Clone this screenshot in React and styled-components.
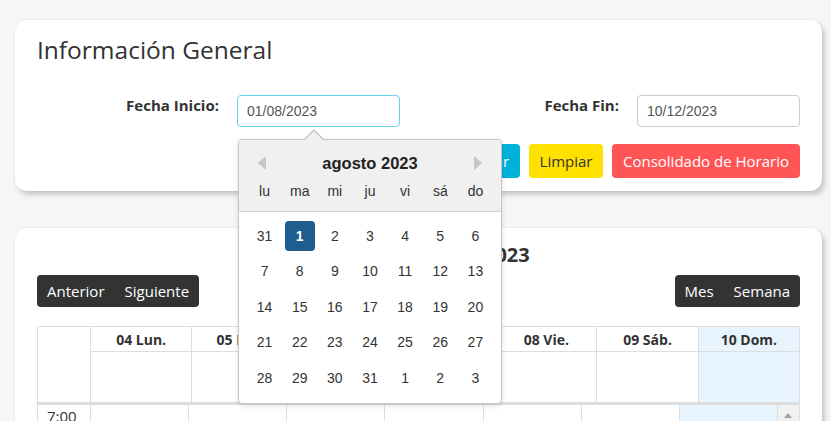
import React from "react";
import styled, { createGlobalStyle } from "styled-components";

const GlobalStyle = createGlobalStyle`
  html, body {
    margin: 0;
    padding: 0;
    overflow: hidden;
  }
  body {
    background: #f6f6f6;
    font-family: "Open Sans", "Liberation Sans", sans-serif;
    color: #333;
  }
  * {
    box-sizing: border-box;
  }
`;

const Page = styled.div`
  padding: 20px 9px 0 15px;
  display: flex;
  flex-direction: column;
  gap: 37px;
`;

const Card = styled.section`
  background: #fff;
  border-radius: 12px;
  box-shadow: 0 0 3px rgba(0, 0, 0, 0.08), 3px 4px 5px rgba(0, 0, 0, 0.18);
  padding: ${({ $pad }) => $pad};
`;

const Title = styled.h2`
  margin: 0;
  font-size: 24.5px;
  font-weight: 400;
  line-height: 33px;
  color: #333;
`;

const FormGrid = styled.div`
  margin-top: 29px;
  display: grid;
  grid-template-columns: 182px 163px 1fr 163px;
  column-gap: 18px;
  align-items: start;
`;

const Label = styled.label`
  text-align: right;
  font-weight: 700;
  font-size: 15px;
  line-height: 21px;
`;

const InputWrap = styled.div`
  position: relative;
`;

const DateInput = styled.input`
  width: 100%;
  height: 32px;
  border: 1px solid ${({ $focus }) => ($focus ? "#66d3f1" : "#ccc")};
  border-radius: 4px;
  padding: 0 9px;
  font-family: "Liberation Sans", Arial, sans-serif;
  font-size: 14px;
  color: #555;
  outline: none;
  background: #fff;
`;

const Actions = styled.div`
  margin-top: 17px;
  display: flex;
  justify-content: flex-end;
  gap: 8.5px;
`;

const Button = styled.button`
  height: 34px;
  padding: 0 11px;
  border: none;
  border-radius: 4px;
  font-family: "Open Sans", sans-serif;
  font-size: 15px;
  background: ${({ $bg }) => $bg};
  color: ${({ $fg }) => $fg};
`;

/* datepicker popup */
const Popup = styled.div`
  position: absolute;
  top: 44px;
  left: 1px;
  width: 264px;
  background: #fff;
  border: 1px solid #c5c5c5;
  border-radius: 4px;
  box-shadow: 0 2px 5px rgba(0, 0, 0, 0.12);
  z-index: 10;
  &::before,
  &::after {
    content: "";
    position: absolute;
    width: 0;
    height: 0;
    border-style: solid;
    border-color: transparent;
  }
  &::before {
    top: -11px;
    left: 65px;
    border-width: 0 10px 10px 10px;
    border-bottom-color: #c5c5c5;
  }
  &::after {
    top: -9px;
    left: 66px;
    border-width: 0 9px 9px 9px;
    border-bottom-color: #f0f0f0;
  }
`;

const PopHeader = styled.div`
  background: #f0f0f0;
  border-bottom: 1px solid #d2d2d2;
  border-radius: 3px 3px 0 0;
  padding: 8px 8px 7px;
  font-family: "Liberation Sans", Arial, sans-serif;
`;

const MonthRow = styled.div`
  height: 30px;
  display: flex;
  align-items: center;
  justify-content: space-between;
  padding: 0 11px;
`;

const MonthTitle = styled.div`
  font-size: 16.5px;
  font-weight: 700;
  color: #222;
`;

const NavArrow = styled.span`
  width: 0;
  height: 0;
  border-top: 7px solid transparent;
  border-bottom: 7px solid transparent;
  ${({ $dir }) =>
    $dir === "left"
      ? "border-right: 8px solid #c6c6c6;"
      : "border-left: 8px solid #c6c6c6;"}
`;

const WeekRow = styled.div`
  display: grid;
  grid-template-columns: repeat(7, 1fr);
  height: 26px;
  align-items: center;
  text-align: center;
  font-size: 14px;
  color: #333;
`;

const DaysGrid = styled.div`
  display: grid;
  grid-template-columns: repeat(7, 1fr);
  grid-auto-rows: 35.5px;
  padding: 6px 8px 7px;
  font-family: "Liberation Sans", Arial, sans-serif;
`;

const DayCell = styled.div`
  display: flex;
  align-items: center;
  justify-content: center;
  font-size: 14px;
  color: #333;
`;

const DayMark = styled.span`
  width: 30px;
  height: 30px;
  display: flex;
  align-items: center;
  justify-content: center;
  border-radius: 4px;
  background: ${({ $active }) => ($active ? "#1f5c8f" : "transparent")};
  color: ${({ $active }) => ($active ? "#fff" : "inherit")};
  font-weight: ${({ $active }) => ($active ? 700 : 400)};
`;

/* week calendar */
const CalTitle = styled.h2`
  margin: 0;
  text-align: center;
  font-size: 20px;
  font-weight: 700;
  line-height: 27px;
  color: #333;
`;

const Toolbar = styled.div`
  margin-top: 7px;
  display: flex;
  justify-content: space-between;
`;

const BtnGroup = styled.div`
  display: flex;
  background: #333;
  border-radius: 4px;
`;

const ToolBtn = styled.button`
  height: 32px;
  padding: 0 10px;
  border: none;
  background: transparent;
  color: #fff;
  font-family: "Open Sans", sans-serif;
  font-size: 15px;
`;

const Table = styled.div`
  margin-top: 19px;
  border-left: 1px solid #ddd;
  border-top: 1px solid #ddd;
`;

const HeadGrid = styled.div`
  display: grid;
  grid-template-columns: 53px repeat(7, 1fr);
  grid-template-rows: 25px 51px;
`;

const AxisCorner = styled.div`
  grid-row: span 2;
  border-right: 1px solid #ddd;
  border-bottom: 1px solid #ddd;
`;

const HeadCell = styled.div`
  border-right: 1px solid #ddd;
  border-bottom: 1px solid #ddd;
  background: ${({ $today }) => ($today ? "#e8f4fd" : "transparent")};
  display: flex;
  align-items: center;
  justify-content: center;
  font-size: 14px;
  font-weight: 700;
`;

const AllDayCell = styled(HeadCell)``;

const Divider = styled.div`
  height: 2px;
  background: #ddd;
`;

const BodyGrid = styled.div`
  display: grid;
  grid-template-columns: 53px repeat(7, 1fr) 21px;
  grid-auto-rows: 48px;
  border-right: 1px solid #ddd;
`;

const TimeCell = styled.div`
  border-right: 1px solid #ddd;
  border-bottom: 1px solid #ddd;
  padding: 1px 9px;
  font-size: 15px;
  line-height: 20px;
`;

const SlotCell = styled.div`
  border-right: 1px solid #ddd;
  border-bottom: 1px solid #ddd;
  background: ${({ $today }) => ($today ? "#e8f4fd" : "transparent")};
`;

const ScrollTrack = styled.div`
  grid-column: 9;
  grid-row: 1 / span ${({ $rows }) => $rows};
  background: #f1f1f1;
  position: relative;
  &::before {
    content: "";
    position: absolute;
    top: 8px;
    left: 6px;
    width: 0;
    height: 0;
    border-left: 4.5px solid transparent;
    border-right: 4.5px solid transparent;
    border-bottom: 5px solid #a3a3a3;
  }
`;

const weekNames = ["lu", "ma", "mi", "ju", "vi", "sá", "do"];
const days = [
  31, 1, 2, 3, 4, 5, 6, 7, 8, 9, 10, 11, 12, 13, 14, 15, 16, 17, 18, 19, 20,
  21, 22, 23, 24, 25, 26, 27, 28, 29, 30, 31, 1, 2, 3,
];
const weekDays = [
  "04 Lun.",
  "05 Mar.",
  "06 Mié.",
  "07 Jue.",
  "08 Vie.",
  "09 Sáb.",
  "10 Dom.",
];
const hours = ["7:00", "8:00", "9:00"];

const DatePicker = () => (
  <Popup>
    <PopHeader>
      <MonthRow>
        <NavArrow $dir="left" />
        <MonthTitle>agosto 2023</MonthTitle>
        <NavArrow $dir="right" />
      </MonthRow>
      <WeekRow>
        {weekNames.map((n) => (
          <span key={n}>{n}</span>
        ))}
      </WeekRow>
    </PopHeader>
    <DaysGrid>
      {days.map((d, i) => (
        <DayCell key={i}>
          <DayMark $active={i === 1}>{d}</DayMark>
        </DayCell>
      ))}
    </DaysGrid>
  </Popup>
);

export default function App() {
  return (
    <>
      <GlobalStyle />
      <Page>
        <Card $pad="13px 22px 13px 22px">
          <Title>Información General</Title>
          <FormGrid>
            <Label>Fecha Inicio:</Label>
            <InputWrap>
              <DateInput $focus readOnly value="01/08/2023" />
              <DatePicker />
            </InputWrap>
            <Label>Fecha Fin:</Label>
            <InputWrap>
              <DateInput readOnly value="10/12/2023" />
            </InputWrap>
          </FormGrid>
          <Actions>
            <Button $bg="#00b1d9" $fg="#fff">
              Buscar
            </Button>
            <Button $bg="#ffe100" $fg="#333">
              Limpiar
            </Button>
            <Button $bg="#ff5557" $fg="#fff">
              Consolidado de Horario
            </Button>
          </Actions>
        </Card>

        <Card $pad="13px 22px 0 22px">
          <CalTitle>04 – 10 diciembre 2023</CalTitle>
          <Toolbar>
            <BtnGroup>
              <ToolBtn>Anterior</ToolBtn>
              <ToolBtn>Siguiente</ToolBtn>
            </BtnGroup>
            <BtnGroup>
              <ToolBtn>Mes</ToolBtn>
              <ToolBtn>Semana</ToolBtn>
            </BtnGroup>
          </Toolbar>
          <Table>
            <HeadGrid>
              <AxisCorner />
              {weekDays.map((d, i) => (
                <HeadCell key={d} $today={i === 6}>
                  {d}
                </HeadCell>
              ))}
              {weekDays.map((d, i) => (
                <AllDayCell key={"a" + d} $today={i === 6} />
              ))}
            </HeadGrid>
            <Divider />
            <BodyGrid>
              {hours.map((h) => (
                <React.Fragment key={h}>
                  <TimeCell>{h}</TimeCell>
                  {weekDays.map((d, i) => (
                    <SlotCell key={h + d} $today={i === 6} />
                  ))}
                </React.Fragment>
              ))}
              <ScrollTrack $rows={hours.length} />
            </BodyGrid>
          </Table>
        </Card>
      </Page>
    </>
  );
}
